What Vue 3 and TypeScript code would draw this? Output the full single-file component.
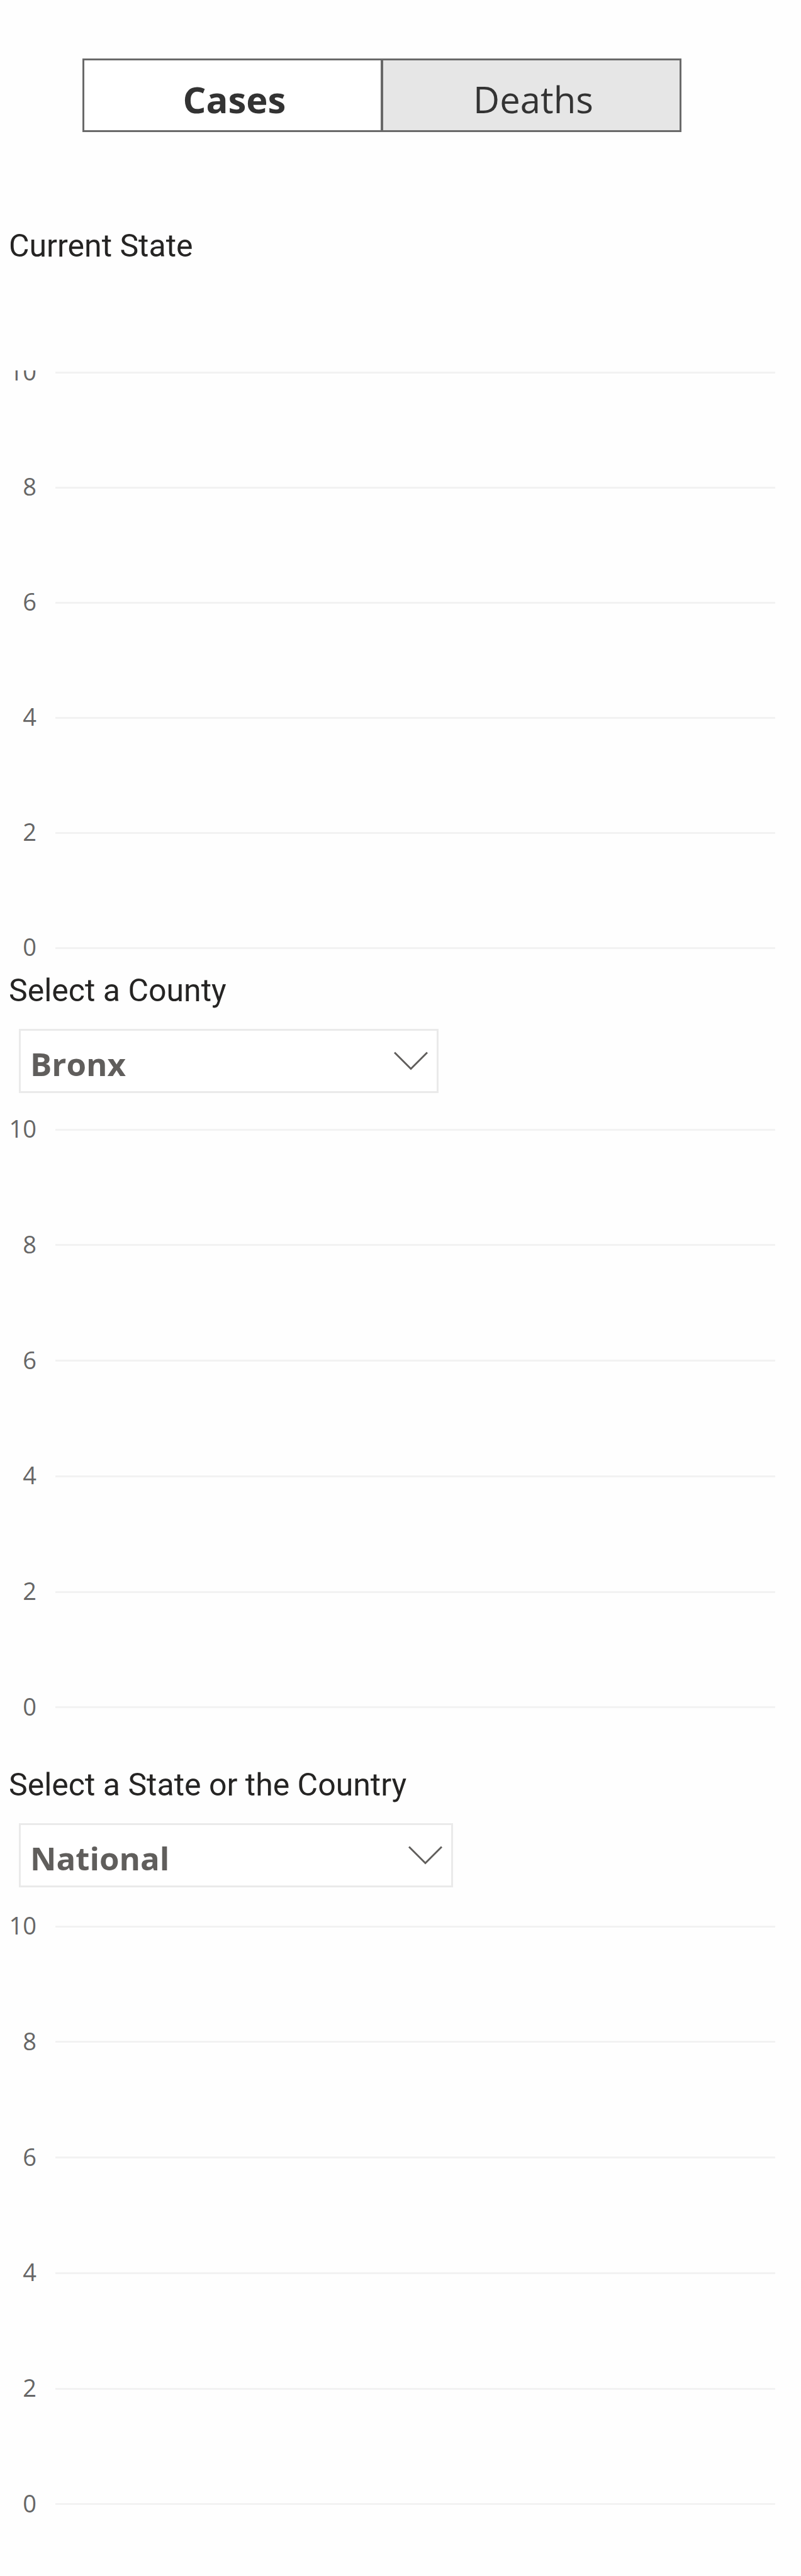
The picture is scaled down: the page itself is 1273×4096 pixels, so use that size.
<script setup lang="ts">
import { ref } from 'vue'

type Metric = 'Cases' | 'Deaths'

const metrics: Metric[] = ['Cases', 'Deaths']
const metric = ref<Metric>('Cases')
const county = ref('Bronx')
const region = ref('National')
const ticks: number[] = [10, 8, 6, 4, 2, 0]
</script>

<template>
  <main class="report">
    <div class="toggle" role="group" aria-label="Metric">
      <button
        v-for="m in metrics"
        :key="m"
        type="button"
        class="toggle-button"
        :class="{ active: metric === m }"
        :aria-pressed="metric === m"
        @click="metric = m"
      >{{ m }}</button>
    </div>

    <section class="panel current">
      <h2 class="title">Current State</h2>
      <div class="viewport">
        <ul class="chart">
          <li v-for="t in ticks" :key="t" class="tick">
            <span class="label">{{ t }}</span>
            <span class="line"></span>
          </li>
        </ul>
      </div>
    </section>

    <section class="panel county">
      <label class="title" for="county">Select a County</label>
      <div class="dropdown">
        <select id="county" v-model="county">
          <option>Bronx</option>
        </select>
        <svg class="chevron" viewBox="0 0 54 30" aria-hidden="true">
          <path d="M1 1.500L27 27.500L53 1.500" />
        </svg>
      </div>
      <ul class="chart">
        <li v-for="t in ticks" :key="t" class="tick">
          <span class="label">{{ t }}</span>
          <span class="line"></span>
        </li>
      </ul>
    </section>

    <section class="panel region">
      <label class="title" for="region">Select a State or the Country</label>
      <div class="dropdown">
        <select id="region" v-model="region">
          <option>National</option>
        </select>
        <svg class="chevron" viewBox="0 0 54 30" aria-hidden="true">
          <path d="M1 1.500L27 27.500L53 1.500" />
        </svg>
      </div>
      <ul class="chart">
        <li v-for="t in ticks" :key="t" class="tick">
          <span class="label">{{ t }}</span>
          <span class="line"></span>
        </li>
      </ul>
    </section>
  </main>
</template>

<style>
body {
  margin: 0;
  background: #fefefe;
}
</style>

<style scoped>
.report {
  box-sizing: border-box;
  padding: 93px 0 94px;
  font-family: "Open Sans", "Noto Sans", sans-serif;
}

.toggle {
  display: flex;
  margin: 0 190px 0 131px;
}

.toggle-button {
  flex: 1 1 0;
  box-sizing: border-box;
  height: 117px;
  margin: 0;
  padding: 12px 0 0 6px;
  border: 3px solid #696969;
  border-radius: 0;
  background: #e6e6e6;
  color: #333;
  font-family: inherit;
  font-size: 58px;
  line-height: 80px;
}

.toggle-button:first-child {
  border-right-width: 2px;
}

.toggle-button:last-child {
  border-left-width: 2px;
}

.toggle-button.active {
  background: #fff;
  font-weight: 700;
}

.panel {
  display: flex;
  flex-direction: column;
}

.current {
  margin-top: 151px;
}

.county {
  margin-top: 6px;
}

.region {
  margin-top: 73px;
}

.title {
  margin: 0;
  padding-left: 14px;
  color: #252423;
  font-family: Roboto, sans-serif;
  font-size: 50px;
  font-weight: 400;
  line-height: 60px;
}

.viewport {
  margin-top: 168px;
  padding-bottom: 12px;
  overflow: hidden;
}

.chart {
  display: flex;
  flex-direction: column;
  justify-content: space-between;
  height: 959px;
  margin: 0;
  padding: 0 41px 0 0;
  list-style: none;
}

.viewport .chart {
  height: 955px;
  margin-top: -17px;
}

.county .chart {
  margin-top: 38px;
}

.region .chart {
  margin-top: 42px;
}

.tick {
  display: flex;
  align-items: center;
  height: 40px;
}

.label {
  flex: none;
  width: 58px;
  margin-right: 30px;
  padding-bottom: 4px;
  color: #666;
  font-size: 38px;
  line-height: 40px;
  text-align: right;
}

.line {
  flex: 1;
  height: 3px;
  background: #f2f2f2;
}

.dropdown {
  position: relative;
  width: 667px;
  height: 102px;
  margin: 31px 0 0 30px;
}

.region .dropdown {
  width: 690px;
}

.dropdown select {
  box-sizing: border-box;
  width: 100%;
  height: 100%;
  padding: 8px 90px 0 15px;
  border: 3px solid #eaeaea;
  border-radius: 0;
  background: #fff;
  color: #605e5c;
  font-family: inherit;
  font-size: 51px;
  font-weight: 700;
  appearance: none;
}

.chevron {
  position: absolute;
  top: 36px;
  right: 17px;
  width: 54px;
  height: 30px;
  fill: none;
  stroke: #605e5c;
  stroke-width: 3;
  pointer-events: none;
}
</style>
